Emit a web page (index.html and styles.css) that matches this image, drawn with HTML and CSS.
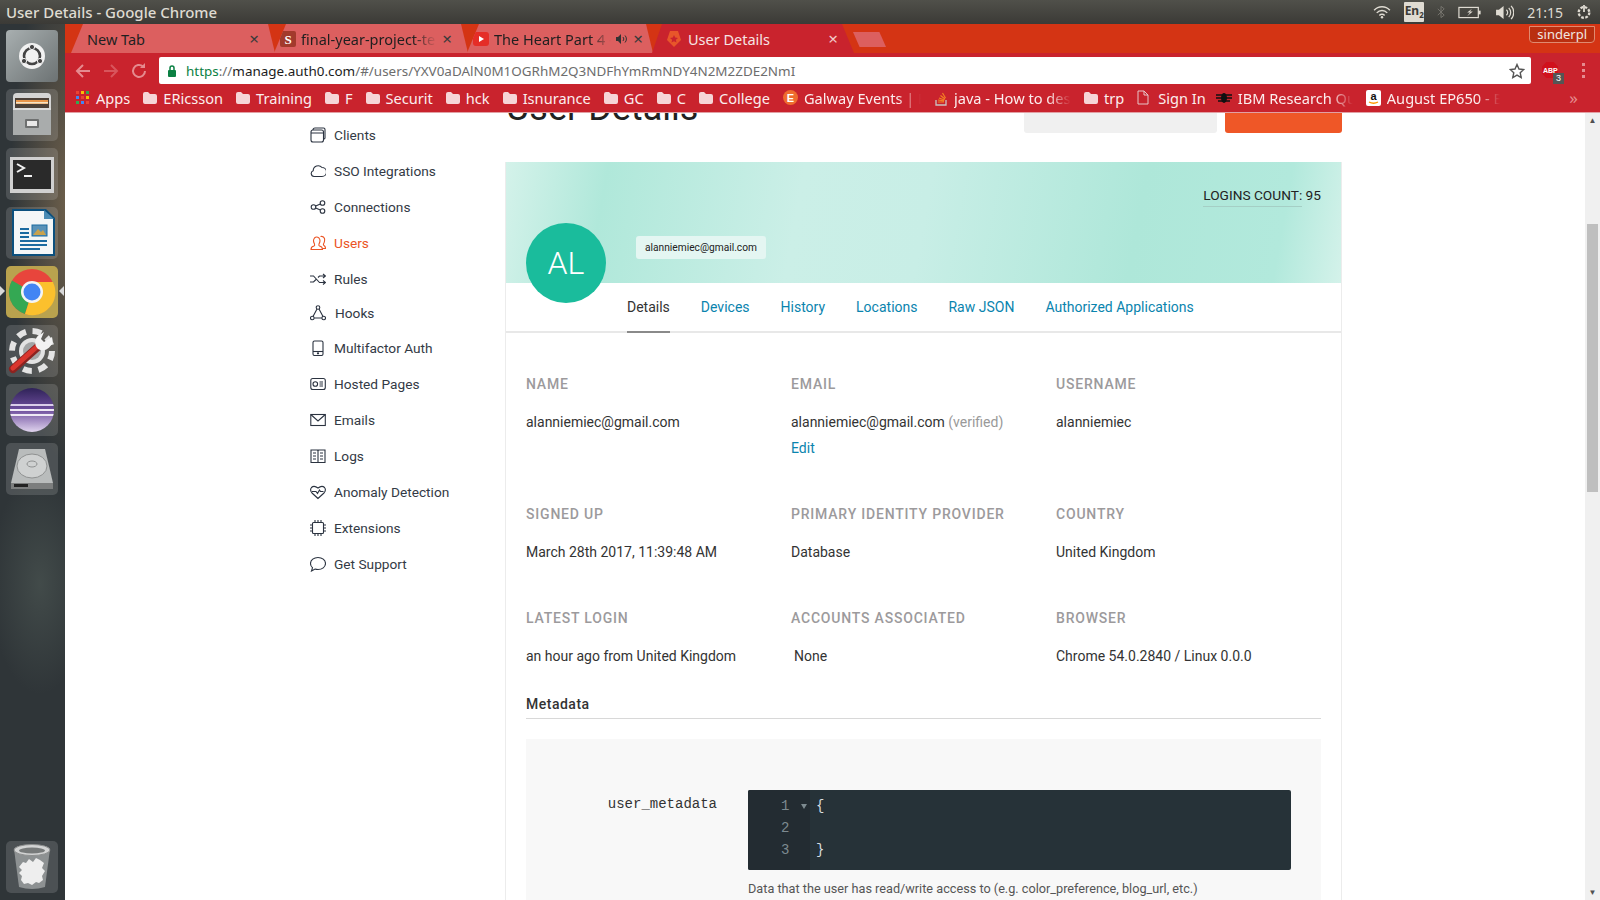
FILE: index.html
```html
<!DOCTYPE html>
<html lang="en">
<head>
    <meta charset="UTF-8">
    <title>User Details - Google Chrome</title>
    <link rel="stylesheet" href="styles.css">
</head>
<body>

<div class="topbar">
    <div class="win-title">User Details - Google Chrome</div>
    <div class="tray">
        <svg width="18" height="14" viewBox="0 0 20 16"><g fill="none" stroke="#dfdbd2" stroke-width="1.6"><path d="M1 6a12 12 0 0 1 18 0"/><path d="M4 9a8 8 0 0 1 12 0"/><path d="M7 12a4 4 0 0 1 6 0"/></g><circle cx="10" cy="14" r="1.4" fill="#dfdbd2"/></svg>
        <div class="lang">En<sub>2</sub></div>
        <svg width="8" height="16" viewBox="0 0 10 16"><path d="M1 4l8 8-4 3V1l4 3-8 8" fill="none" stroke="#77756f" stroke-width="1.2"/></svg>
        <svg width="24" height="13" viewBox="0 0 26 14"><rect x="1" y="1.500" width="21" height="11" fill="none" stroke="#dfdbd2" stroke-width="1.300"/><rect x="22" y="5" width="2.500" height="4" fill="#dfdbd2"/><path d="M15 3l-5 4h3l-3 4 6-5h-3z" fill="#dfdbd2"/></svg>
        <svg width="19" height="15" viewBox="0 0 20 16"><path d="M1 5h3l5-4v14l-5-4H1z" fill="#dfdbd2"/><g fill="none" stroke="#dfdbd2" stroke-width="1.300"><path d="M12 5a4 4 0 0 1 0 6"/><path d="M14.500 3a7 7 0 0 1 0 10"/><path d="M17 1a10 10 0 0 1 0 14"/></g></svg>
        <div class="clock">21:15</div>
        <svg width="16" height="16" viewBox="0 0 18 18"><circle cx="9" cy="9.500" r="6" fill="none" stroke="#dfdbd2" stroke-width="2.600" stroke-dasharray="3 1.700"/><circle cx="9" cy="9.500" r="3.200" fill="#3f3e3a"/><path d="M9 1v8" stroke="#dfdbd2" stroke-width="2"/></svg>
    </div>
</div>

<div class="desktop">
    <div class="launcher">
        <div class="launch-item">
            <svg width="52" height="52" viewBox="0 0 52 52"><defs><linearGradient id="g1" x1="0" y1="0" x2="1" y2="1"><stop offset="0" stop-color="#a8afb0"/><stop offset="1" stop-color="#6c7273"/></linearGradient></defs><rect width="52" height="52" rx="4" fill="url(#g1)"/><circle cx="26" cy="26" r="13" fill="#f2f2f2"/><circle cx="26" cy="26" r="8" fill="none" stroke="#444" stroke-width="2.600"/><circle cx="26" cy="17" r="2.600" fill="#444" stroke="#f2f2f2"/><circle cx="18" cy="31" r="2.600" fill="#444" stroke="#f2f2f2"/><circle cx="34" cy="31" r="2.600" fill="#444" stroke="#f2f2f2"/></svg>
        </div>
        <div class="launch-item tile">
            <svg width="52" height="52" viewBox="0 0 52 52"><path d="M7 8q0-4 4-4h30q4 0 4 4v38H7z" fill="#d4d4d4"/><rect x="9" y="9" width="34" height="11" fill="#4b4038"/><rect x="10" y="11" width="32" height="4" fill="#e8954a"/><rect x="10" y="13" width="32" height="1.500" fill="#f4e3c5"/><path d="M7 19h38v27H7z" fill="#a9acac"/><path d="M7 19h38v2H7z" fill="#dcdcdc"/><rect x="19" y="30" width="14" height="9" rx="1" fill="#6e7070"/><rect x="21" y="32" width="10" height="5" fill="#e9e9e9"/></svg>
        </div>
        <div class="launch-item tile">
            <svg width="52" height="52" viewBox="0 0 52 52"><rect x="4" y="9" width="44" height="36" fill="#d0d0d0"/><rect x="7" y="12" width="38" height="29" fill="#2a2a2a"/><path d="M11 16l7 4-7 4" fill="none" stroke="#f2f2f2" stroke-width="2"/><rect x="18" y="27" width="8" height="2" fill="#f2f2f2"/></svg>
        </div>
        <div class="launch-item tile">
            <svg width="52" height="52" viewBox="0 0 52 52"><path d="M6 2h34l9 9v38H6z" fill="#0b4f7d"/><path d="M8 4h31v8h8v35H8z" fill="#f4f6f7"/><path d="M38 3l10 9h-10z" fill="#4b8bb4"/><rect x="14" y="21" width="9" height="2" fill="#1b6aa0"/><rect x="14" y="25" width="9" height="2" fill="#1b6aa0"/><rect x="14" y="29" width="9" height="2" fill="#1b6aa0"/><rect x="14" y="33" width="27" height="2" fill="#1b6aa0"/><rect x="14" y="37" width="27" height="2" fill="#1b6aa0"/><rect x="14" y="41" width="20" height="2" fill="#1b6aa0"/><rect x="26" y="18" width="15" height="11" fill="#5a92b8" stroke="#1b6aa0"/><path d="M27 28l5-6 3 3 2-2 3 5z" fill="#c9a24d"/></svg>
        </div>
        <div class="launch-item tile-on">
            <svg width="52" height="52" viewBox="0 0 52 52"><circle cx="26" cy="26" r="23" fill="#e8453c"/><path d="M26 26L6 14.500A23 23 0 0 0 19 48z" fill="#34a853"/><path d="M26 26l-7 22A23 23 0 0 0 47 16H26z" fill="#fbc02d"/><circle cx="26" cy="26" r="11" fill="#f4f4f4"/><circle cx="26" cy="26" r="8.500" fill="#4285f4"/></svg>
        </div>
        <div class="launch-item tile">
            <svg width="52" height="52" viewBox="0 0 52 52"><circle cx="26" cy="26" r="20" fill="none" stroke="#e3e3e3" stroke-width="6" stroke-dasharray="9 6.700"/><circle cx="26" cy="26" r="13" fill="#e3e3e3"/><circle cx="26" cy="26" r="9" fill="#a3a5a6"/><path d="M7 44L34 20" stroke="#8c2320" stroke-width="8" stroke-linecap="round"/><path d="M7 43L34 19" stroke="#d9362e" stroke-width="5" stroke-linecap="round"/><path d="M32 24a9 9 0 0 1 3-15l3-2-3 7 3 3 8-5a10 10 0 0 1-14 12z" fill="#f2f2f2"/></svg>
        </div>
        <div class="launch-item tile">
            <svg width="52" height="52" viewBox="0 0 52 52"><defs><linearGradient id="g2" x1="0" y1="0" x2="0" y2="1"><stop offset="0" stop-color="#2f2258"/><stop offset=".5" stop-color="#6f4f9e"/><stop offset="1" stop-color="#e0d4ee"/></linearGradient><clipPath id="ball"><circle cx="26" cy="26" r="22"/></clipPath></defs><g clip-path="url(#ball)"><rect x="4" y="4" width="44" height="44" fill="url(#g2)"/><rect x="4" y="20" width="44" height="2" fill="#d9cde8"/><rect x="4" y="25" width="44" height="2" fill="#efe9f5"/><rect x="4" y="30" width="44" height="2" fill="#efe9f5"/></g></svg>
        </div>
        <div class="launch-item tile">
            <svg width="52" height="52" viewBox="0 0 52 52"><path d="M13 6h26l8 34H5z" fill="#b9bcbc"/><path d="M5 40h42v6H5z" fill="#7c7e7e"/><path d="M8 41h14v3H8z" fill="#222"/><ellipse cx="26" cy="23" rx="15" ry="12" fill="#cfd1d1" stroke="#8f9191"/><ellipse cx="26" cy="21" rx="5" ry="3" fill="none" stroke="#8f9191"/></svg>
        </div>
        <div class="launch-item tile trash">
            <svg width="52" height="52" viewBox="0 0 52 52"><path d="M8 8l5 38q13 4 26 0l5-38z" fill="#8d9192"/><ellipse cx="26" cy="9" rx="18" ry="5.500" fill="#d2d3d3" stroke="#8d8f8f"/><ellipse cx="26" cy="9.500" rx="13" ry="3" fill="#777a7a"/><path d="M13 26l4-5 3 1 3-4 4 3 3-4 4 2 4 3-2 5 3 3-3 5 1 4-4 3-3-1-4 3-4-2-4 1-3-4 1-4-3-3 3-3z" fill="#eeeeee"/></svg>
        </div>
    </div>

    <div class="browser">
        <div class="tabstrip">
            <div class="tab tab-new"><span class="tab-label">New Tab</span><span class="tab-x">×</span></div>
            <div class="tab tab-so">
                <svg class="fav" width="16" height="16" viewBox="0 0 16 16"><rect width="16" height="16" rx="2" fill="#a33a2c"/><text x="8" y="13" font-size="13" font-weight="700" fill="#fff" text-anchor="middle" font-family="Liberation Serif">S</text></svg>
                <span class="tab-label fade">final-year-project-te</span><span class="tab-x">×</span>
            </div>
            <div class="tab tab-yt">
                <svg class="fav" width="16" height="16" viewBox="0 0 16 16"><rect y="1" width="16" height="14" rx="3" fill="#e52d27"/><path d="M6 5l5 3-5 3z" fill="#fff"/></svg>
                <span class="tab-label fade">The Heart Part 4 -</span>
                <svg width="12" height="12" viewBox="0 0 12 12"><path d="M0 4h2l3-3v10L2 8H0z" fill="#333"/><path d="M7 4a3 3 0 0 1 0 4M9 2.500a5 5 0 0 1 0 7" fill="none" stroke="#333"/></svg>
                <span class="tab-x">×</span>
            </div>
            <div class="tab tab-active">
                <svg class="fav" width="18" height="18" viewBox="0 0 18 18"><path d="M5 1h8l3 9-7 7-7-7z" fill="#e8562a"/><path d="M9 5l1.200 2.600 2.800.300-2.100 1.900.6 2.800L9 11.200l-2.500 1.400.6-2.800L5 7.900l2.800-.3z" fill="#c9232d"/></svg>
                <span class="tab-label">User Details</span><span class="tab-x">×</span>
            </div>
            <div class="tab-add"></div>
            <div class="profile">sinderpl</div>
        </div>

        <div class="toolbar">
            <div class="nav-btns">
                <svg width="18" height="18" viewBox="0 0 18 18"><path d="M16 9H3m6-6L3 9l6 6" fill="none" stroke="#e58b8f" stroke-width="2"/></svg>
                <svg width="18" height="18" viewBox="0 0 18 18"><path d="M2 9h13M9 3l6 6-6 6" fill="none" stroke="#d8555c" stroke-width="2"/></svg>
                <svg width="18" height="18" viewBox="0 0 18 18"><path d="M15 9a6 6 0 1 1-2-4.500" fill="none" stroke="#e58b8f" stroke-width="2"/><path d="M15 1v5h-5z" fill="#e58b8f"/></svg>
            </div>
            <div class="omnibox">
                <svg width="12" height="14" viewBox="0 0 12 14"><rect x="2" y="6" width="8" height="7" rx="1" fill="#0b8043"/><path d="M4 6V4a2 2 0 0 1 4 0v2" fill="none" stroke="#0b8043" stroke-width="1.500"/></svg>
                <div class="url"><span class="url-https">https</span><span class="url-dim">://</span>manage.auth0.com<span class="url-dim">/#/users/YXV0aDAlN0M1OGRhM2Q3NDFhYmRmNDY4N2M2ZDE2NmI</span></div>
                <svg class="star" width="16" height="16" viewBox="0 0 16 16"><path d="M8 1.500l2 4.500 4.800.500-3.600 3.200 1 4.800L8 12.100l-4.200 2.400 1-4.800L1.200 6.500 6 6z" fill="none" stroke="#555" stroke-width="1.400"/></svg>
            </div>
            <div class="abp">
                <svg width="16" height="16" viewBox="0 0 18 18"><path d="M5 0h8l5 5v8l-5 5H5l-5-5V5z" fill="#d0111c"/></svg>
                <span class="abp-text">ABP</span>
                <span class="abp-count">3</span>
            </div>
            <div class="menu-dots"><i></i><i></i><i></i></div>
        </div>

        <div class="bookmarks">
            <div class="bm"><svg width="14" height="14" viewBox="0 0 14 14"><g><rect width="3" height="3" fill="#ea4335"/><rect x="5" width="3" height="3" fill="#fbbc05"/><rect x="10" width="3" height="3" fill="#34a853"/><rect y="5" width="3" height="3" fill="#4285f4"/><rect x="5" y="5" width="3" height="3" fill="#ea4335"/><rect x="10" y="5" width="3" height="3" fill="#fbbc05"/><rect y="10" width="3" height="3" fill="#34a853"/><rect x="5" y="10" width="3" height="3" fill="#4285f4"/><rect x="10" y="10" width="3" height="3" fill="#ea4335"/></g></svg>Apps</div>
            <div class="bm"><svg class="folder" viewBox="0 0 14 12"><use href="#ico-folder"/></svg>ERicsson</div>
            <div class="bm"><svg class="folder" viewBox="0 0 14 12"><use href="#ico-folder"/></svg>Training</div>
            <div class="bm"><svg class="folder" viewBox="0 0 14 12"><use href="#ico-folder"/></svg>F</div>
            <div class="bm"><svg class="folder" viewBox="0 0 14 12"><use href="#ico-folder"/></svg>Securit</div>
            <div class="bm"><svg class="folder" viewBox="0 0 14 12"><use href="#ico-folder"/></svg>hck</div>
            <div class="bm"><svg class="folder" viewBox="0 0 14 12"><use href="#ico-folder"/></svg>Isnurance</div>
            <div class="bm"><svg class="folder" viewBox="0 0 14 12"><use href="#ico-folder"/></svg>GC</div>
            <div class="bm"><svg class="folder" viewBox="0 0 14 12"><use href="#ico-folder"/></svg>C</div>
            <div class="bm"><svg class="folder" viewBox="0 0 14 12"><use href="#ico-folder"/></svg>College</div>
            <div class="bm"><svg width="15" height="15" viewBox="0 0 15 15"><circle cx="7.500" cy="7.500" r="7.500" fill="#ef6c2e"/><text x="7.500" y="11.500" font-size="11" font-weight="700" fill="#fff" text-anchor="middle" font-family="Liberation Sans">E</text></svg><span class="bm-fade w117">Galway Events | E</span></div>
            <div class="bm"><svg width="14" height="16" viewBox="0 0 14 16"><path d="M2 10v5h10v-5" fill="none" stroke="#c9c4c0" stroke-width="1.300"/><path d="M4 12h6M4 10l6 .8M5 8l5.500 2M6.500 5.500l4.500 3.500M8.500 3l3 5" stroke="#f48024" stroke-width="1.200"/></svg><span class="bm-fade w117b">java - How to des</span></div>
            <div class="bm"><svg class="folder" viewBox="0 0 14 12"><use href="#ico-folder"/></svg>trp</div>
            <div class="bm bm-doc"><svg width="12" height="15" viewBox="0 0 12 15"><path d="M1 1h6l4 4v9H1zM7 1v4h4" fill="none" stroke="#e6c6c8"/></svg>Sign In</div>
            <div class="bm"><svg width="16" height="12" viewBox="0 0 16 12"><ellipse cx="8" cy="6" rx="3" ry="5" fill="#111"/><path d="M0 3h16M0 6h16M2 9h12" stroke="#111" stroke-width="1.300"/></svg><span class="bm-fade w115">IBM Research Qu</span></div>
            <div class="bm"><svg width="15" height="16" viewBox="0 0 15 16"><rect width="15" height="16" rx="2" fill="#fff"/><text x="7.500" y="10" font-size="11" font-weight="700" fill="#111" text-anchor="middle" font-family="Liberation Sans">a</text><path d="M3 12q4.500 2.500 9 0" fill="none" stroke="#f90" stroke-width="1.400"/></svg><span class="bm-fade w113">August EP650 - B</span></div>
            <div class="bm-more">»</div>
        </div>

        <div class="viewport">
            <div class="page">
                <nav class="sidebar">
                    <a class="side-link"><svg viewBox="0 0 16 16"><rect x="1" y="3" width="12.500" height="12" rx="2"/><path d="M1 6h12.500M3 3q0-2 2-2h8.500q1.500 0 1.500 1.500V11q0 1-1.500 1"/></svg>Clients</a>
                    <a class="side-link"><svg viewBox="0 0 16 16"><path d="M4 13.500a3 3 0 0 1-.8-5.800A5 5 0 0 1 12 4.500a4.500 4.500 0 0 1 0 9z"/></svg>SSO Integrations</a>
                    <a class="side-link"><svg viewBox="0 0 16 16"><circle cx="3.500" cy="8" r="2.300"/><circle cx="12.500" cy="4" r="2.300"/><circle cx="12.500" cy="12" r="2.300"/><path d="M5.600 7l4.800-2.100M5.600 9l4.800 2.100"/></svg>Connections</a>
                    <a class="side-link active"><svg viewBox="0 0 16 16"><path d="M1 14.500q0-3 3-3.500 1-.500.500-2-2-3.500 0-6 2-2 4.500 0 2 2.500 0 6-.5 1.500.5 2 3 .5 3 3.500z"/><path d="M10.500 1.500q3-.8 4 2 .5 3-1 5.500-.3 1 .5 1.500 1.500.8 1.500 3h-3"/></svg>Users</a>
                    <a class="side-link"><svg viewBox="0 0 16 16"><path d="M0 5h3.500l6 6.500H15M0 11h3.500L6 8.500M8 6.500l1.500-1.500H15M13 3l2.500 2-2.500 2M13 9.500l2.500 2-2.500 2"/></svg>Rules</a>
                    <a class="side-link hook"><svg viewBox="0 0 16 16"><circle cx="8" cy="2.500" r="1.800"/><circle cx="2.300" cy="13" r="1.800"/><circle cx="13.700" cy="13" r="1.800"/><path d="M7 4L3 11.500M9 4l4 7.500M4.100 13h7.800"/></svg>Hooks</a>
                    <a class="side-link"><svg viewBox="0 0 16 16"><rect x="3" y="1" width="10" height="14.500" rx="1.500"/><path d="M3 11.500h10"/><circle cx="8" cy="13.300" r=".6"/></svg>Multifactor Auth</a>
                    <a class="side-link"><svg viewBox="0 0 16 16"><rect x=".8" y="2.500" width="14.500" height="11" rx="2"/><circle cx="5.300" cy="8" r="2.300"/><path d="M9.500 6h3.500M9.500 8h3.500M9.500 10h3.500"/></svg>Hosted Pages</a>
                    <a class="side-link"><svg viewBox="0 0 16 16"><rect x=".8" y="2.500" width="14.500" height="11"/><path d="M.8 2.500L8 9l7.300-6.500"/></svg>Emails</a>
                    <a class="side-link"><svg viewBox="0 0 16 16"><path d="M1 2h6.500L8 3l.5-1H15v12.500H1zM8 3v11.500M3 5h3M3 8h3M3 11h3M10 5h3M10 8h3M10 11h3"/></svg>Logs</a>
                    <a class="side-link"><svg viewBox="0 0 16 16"><path d="M8 14.500L2 9Q-.5 6 1.500 3.500 4 1 8 4q4-3 6.500-.5Q16.500 6 14 9z"/><path d="M2 7.500h4l1.500 2 2-3.500 1 1.500h3"/></svg>Anomaly Detection</a>
                    <a class="side-link"><svg viewBox="0 0 16 16"><rect x="2.500" y="2.500" width="11" height="11" rx="1"/><path d="M5 0v2.500M8 0v2.500M11 0v2.500M5 13.500V16M8 13.500V16M11 13.500V16M0 5h2.500M0 8h2.500M0 11h2.500M13.500 5H16M13.500 8H16M13.500 11H16"/></svg>Extensions</a>
                    <a class="side-link"><svg viewBox="0 0 16 16"><path d="M8 1.500c4 0 7.500 2.500 7.500 6s-3.500 6-7.500 6q-1.500 0-3-.5L1.500 15l1-3.300Q.5 10 .5 7.500c0-3.500 3.500-6 7.500-6z"/></svg>Get Support</a>
                </nav>

                <main class="main">
                    <div class="page-head">
                        <h1>User Details</h1>
                        <div class="head-btns">
                            <div class="btn btn-grey"></div>
                            <div class="btn btn-orange"></div>
                        </div>
                    </div>

                    <section class="panel">
                        <div class="banner">
                            <div class="logins"><span class="logins-label">LOGINS COUNT:</span> 95</div>
                            <div class="avatar">AL</div>
                            <div class="email-chip">alanniemiec@gmail.com</div>
                        </div>

                        <div class="user-tabs">
                            <a class="user-tab current">Details</a>
                            <a class="user-tab">Devices</a>
                            <a class="user-tab">History</a>
                            <a class="user-tab">Locations</a>
                            <a class="user-tab">Raw JSON</a>
                            <a class="user-tab">Authorized Applications</a>
                        </div>

                        <div class="details">
                            <div class="field-row first">
                                <div class="field">
                                    <div class="label">NAME</div>
                                    <div class="value">alanniemiec@gmail.com</div>
                                </div>
                                <div class="field">
                                    <div class="label">EMAIL</div>
                                    <div class="value">alanniemiec@gmail.com <span class="muted">(verified)</span></div>
                                    <a class="edit">Edit</a>
                                </div>
                                <div class="field">
                                    <div class="label">USERNAME</div>
                                    <div class="value">alanniemiec</div>
                                </div>
                            </div>
                            <div class="field-row">
                                <div class="field">
                                    <div class="label">SIGNED UP</div>
                                    <div class="value">March 28th 2017, 11:39:48 AM</div>
                                </div>
                                <div class="field">
                                    <div class="label">PRIMARY IDENTITY PROVIDER</div>
                                    <div class="value">Database</div>
                                </div>
                                <div class="field">
                                    <div class="label">COUNTRY</div>
                                    <div class="value">United Kingdom</div>
                                </div>
                            </div>
                            <div class="field-row last">
                                <div class="field">
                                    <div class="label">LATEST LOGIN</div>
                                    <div class="value">an hour ago from United Kingdom</div>
                                </div>
                                <div class="field">
                                    <div class="label">ACCOUNTS ASSOCIATED</div>
                                    <div class="value indent">None</div>
                                </div>
                                <div class="field">
                                    <div class="label">BROWSER</div>
                                    <div class="value">Chrome 54.0.2840 / Linux 0.0.0</div>
                                </div>
                            </div>

                            <h2 class="section-title">Metadata</h2>
                            <div class="meta-box">
                                <div class="meta-row">
                                    <div class="meta-name">user_metadata</div>
                                    <div class="meta-body">
                                        <div class="editor">
                                            <div class="gutter">
                                                <div class="ln">1<i class="fold"></i></div>
                                                <div class="ln">2</div>
                                                <div class="ln">3</div>
                                            </div>
                                            <div class="code">
                                                <div>{</div>
                                                <div>&nbsp;</div>
                                                <div>}</div>
                                            </div>
                                        </div>
                                        <p class="help">Data that the user has read/write access to (e.g. color_preference, blog_url, etc.)</p>
                                    </div>
                                </div>
                            </div>
                        </div>
                    </section>
                </main>
            </div>
            <div class="scrollbar">
                <div class="sb-arrow">▲</div>
                <div class="sb-track"><div class="sb-thumb"></div></div>
                <div class="sb-arrow">▼</div>
            </div>
        </div>
    </div>
</div>

<svg class="defs" width="0" height="0"><symbol id="ico-folder" viewBox="0 0 14 12"><path d="M0 2q0-2 2-2h3l2 2h5q2 0 2 2v6q0 2-2 2H2q-2 0-2-2z" fill="#f6d5d7"/></symbol></svg>

</body>
</html>
```

FILE: styles.css
```css
* {
    box-sizing: border-box;
}
html, body {
    margin: 0;
    padding: 0;
    height: 100%;
    overflow: hidden;
}
body {
    width: 1600px;
    height: 900px;
    display: flex;
    flex-direction: column;
    font-family: Roboto, Arial, sans-serif;
    color: #333;
    background: #fff;
}
a {
    text-decoration: none;
    color: inherit;
}
.defs {
    position: absolute;
}

/* ubuntu top bar */
.topbar {
    height: 24px;
    flex: none;
    display: flex;
    align-items: center;
    justify-content: space-between;
    padding: 0 8px 0 6px;
    background: linear-gradient(#50504a, #3b3a36);
    color: #dfdbd2;
}
.win-title {
    font-family: "Noto Sans", sans-serif;
    font-size: 15px;
    font-weight: 500;
}
.tray {
    display: flex;
    align-items: center;
    gap: 13px;
}
.lang {
    width: 20px;
    height: 20px;
    background: #dfdbd2;
    color: #3b3a36;
    font: 700 12px/18px "Noto Sans", sans-serif;
    text-align: center;
    border-radius: 1px;
}
.lang sub {
    font-size: 8px;
    line-height: 0;
}
.clock {
    font: 14px "Noto Sans", sans-serif;
}

.desktop {
    flex: 1;
    display: flex;
    min-height: 0;
}

/* launcher */
.launcher {
    width: 65px;
    flex: none;
    display: flex;
    flex-direction: column;
    gap: 7px;
    padding: 6px 0 7px 6px;
    background:
        radial-gradient(ellipse 60px 260px at 70px 180px, rgba(190, 150, 100, .45), transparent),
        radial-gradient(ellipse 50px 110px at 40px 560px, rgba(110, 125, 115, .3), transparent),
        #2f3538;
}
.launch-item {
    width: 52px;
    height: 52px;
    border-radius: 5px;
    position: relative;
}
.tile {
    background: rgba(255, 255, 255, .14);
}
.tile-on {
    background: #b9a24e;
}
.tile-on::before, .tile-on::after {
    content: "";
    position: absolute;
    top: 20px;
    border-style: solid;
    border-color: transparent;
}
.tile-on::before {
    left: -6px;
    border-width: 5px 0 5px 5px;
    border-left-color: #d8d8d8;
}
.tile-on::after {
    right: -6px;
    border-width: 5px 5px 5px 0;
    border-right-color: #d8d8d8;
}
.trash {
    margin-top: auto;
}

/* chrome */
.browser {
    flex: 1;
    min-width: 0;
    display: flex;
    flex-direction: column;
}
.tabstrip {
    height: 29px;
    flex: none;
    display: flex;
    align-items: stretch;
    padding-left: 6px;
    position: relative;
    background: #d43414;
    font-family: "Noto Sans", sans-serif;
    font-size: 14.500px;
}
.tab {
    display: flex;
    align-items: center;
    gap: 5px;
    height: 29px;
    padding: 0 16px 0 6px;
    margin-right: -1px;
    background: #dc5f5f;
    color: #1f1f1f;
    clip-path: polygon(0 100%, 12px 0, calc(100% - 7px) 0, 100% 100%);
}
.tab-new {
    width: 204px;
    padding-left: 16px;
}
.tab-so {
    width: 194px;
}
.tab-yt {
    width: 186px;
    padding-right: 10px;
}
.tab-active {
    width: 202px;
    background: #c9232d;
    color: #f6e4e4;
    padding-left: 13px;
    clip-path: polygon(0 100%, 10px 0, calc(100% - 12px) 0, 100% 100%);
}
.tab-label {
    flex: 1;
    white-space: nowrap;
    overflow: hidden;
}
.fade {
    -webkit-mask-image: linear-gradient(to right, #000 82%, transparent);
    mask-image: linear-gradient(to right, #000 82%, transparent);
}
.tab-x {
    font-size: 17px;
    line-height: 1;
    color: #3a3a3a;
}
.tab-active .tab-x {
    color: #f2c8c8;
}
.tab-add {
    width: 33px;
    height: 15px;
    margin: 8px 0 0 0;
    background: #dc5f5f;
    clip-path: polygon(0 0, 80% 0, 100% 100%, 20% 100%);
}
.profile {
    position: absolute;
    right: 5px;
    top: 2px;
    height: 17px;
    padding: 0 7px;
    line-height: 15px;
    font-size: 13px;
    color: #f1e6e0;
    background: #b92f10;
    border: 1px solid #e08a70;
    border-radius: 0 0 4px 4px;
}
.toolbar {
    height: 32px;
    flex: none;
    display: flex;
    align-items: center;
    background: #c9232d;
    padding: 3px 6px 0 9px;
}
.nav-btns {
    width: 85px;
    display: flex;
    gap: 10px;
    align-items: center;
}
.omnibox {
    width: 1372px;
    height: 27px;
    display: flex;
    align-items: center;
    gap: 8px;
    padding: 0 6px 0 7px;
    background: #fff;
    border-radius: 2px;
}
.url {
    flex: 1;
    font: 13.450px "Noto Sans", sans-serif;
    color: #1c1c1c;
    white-space: nowrap;
}
.url-https {
    color: #0b8043;
}
.url-dim {
    color: #6d6d6d;
}
.abp {
    position: relative;
    width: 22px;
    height: 22px;
    margin-left: 11px;
    margin-right: 18px;
    padding-top: 2px;
}
.abp-text {
    position: absolute;
    left: 1px;
    top: 6px;
    font: 700 7px/9px "Liberation Sans", sans-serif;
    color: #fff;
}
.abp-count {
    position: absolute;
    left: 11px;
    top: 13px;
    width: 11px;
    height: 11px;
    background: #555;
    color: #fff;
    font: 9px/11px "Liberation Sans", sans-serif;
    text-align: center;
}
.menu-dots i {
    display: block;
    width: 3px;
    height: 3px;
    margin: 3px 0;
    background: #e58b8f;
}
.bookmarks {
    height: 28px;
    flex: none;
    display: flex;
    align-items: center;
    gap: 13px;
    padding: 0 0 2px 11px;
    background: #c9232d;
    border-bottom: 1px solid #e2a0a4;
    color: #fbeeee;
    font: 14.600px "Noto Sans", sans-serif;
    position: relative;
}
.bm {
    display: flex;
    align-items: center;
    gap: 6px;
    white-space: nowrap;
}
.bm-doc {
    gap: 9px;
    margin-right: -3px;
}
.folder {
    width: 14px;
    height: 12px;
}
.bm-fade {
    display: block;
    overflow: hidden;
    -webkit-mask-image: linear-gradient(to right, #000 80%, transparent);
    mask-image: linear-gradient(to right, #000 80%, transparent);
}
.w117 { width: 117px; }
.w117b { width: 117px; }
.w115 { width: 115px; }
.w113 { width: 113px; }
.bm-more {
    position: absolute;
    right: 22px;
    top: 1px;
    font-size: 17px;
    color: #e58b8f;
}

/* page */
.viewport {
    flex: 1;
    min-height: 0;
    display: flex;
    background: #fff;
}
.page {
    flex: 1;
    min-width: 0;
    overflow: hidden;
    display: flex;
}
.sidebar {
    width: 440px;
    flex: none;
    padding: 4px 0 0 245px;
    display: flex;
    flex-direction: column;
}
.side-link {
    height: 36px;
    display: flex;
    align-items: center;
    gap: 8px;
    font-size: 13.700px;
    color: #333a45;
}
.side-link svg {
    width: 16px;
    height: 16px;
    flex: none;
    fill: none;
    stroke: #2b3340;
    stroke-width: 1.100;
}
.side-link.hook {
    height: 31px;
    margin-bottom: 2px;
    gap: 9px;
}
.side-link.active {
    color: #eb5424;
}
.side-link.active svg {
    stroke: #eb5424;
}

.main {
    width: 837px;
    flex: none;
}
.page-head {
    height: 49px;
    display: flex;
    justify-content: space-between;
    align-items: flex-end;
    padding-bottom: 29px;
    overflow: hidden;
}
.page-head h1 {
    margin: 0 0 5px 1px;
    font-size: 36px;
    font-weight: 400;
    line-height: 40px;
    color: #222;
}
.head-btns {
    display: flex;
    gap: 8px;
}
.btn {
    height: 30px;
    border-radius: 3px;
}
.btn-grey {
    width: 193px;
    background: #f0f0f0;
}
.btn-orange {
    width: 117px;
    background: #ef5727;
}
.panel {
    border: 1px solid #ececec;
    border-top: none;
}
.banner {
    height: 121px;
    position: relative;
    background: linear-gradient(100deg, #d4f2ea 0%, #b0e8da 12%, #cbefe7 35%, #c8eee6 50%, #aee7d9 75%, #b2e9dc 92%, #d4f2ea 100%);
}
.logins {
    position: absolute;
    right: 20px;
    top: 25px;
    font-size: 13.700px;
    color: #222;
}
.logins-label {
    display: inline-block;
    padding-bottom: 3px;
    border-bottom: 1px solid #a5cfc5;
}
.avatar {
    position: absolute;
    left: 20px;
    top: 61px;
    width: 80px;
    height: 80px;
    border-radius: 50%;
    background: #1abc9c;
    color: #fff;
    font-size: 32px;
    font-weight: 300;
    line-height: 80px;
    text-align: center;
}
.email-chip {
    position: absolute;
    left: 130px;
    top: 74px;
    width: 130px;
    height: 23px;
    background: #e4f6f2;
    border-radius: 3px;
    font-size: 10.200px;
    line-height: 24px;
    text-align: center;
    color: #222;
}
.user-tabs {
    height: 50px;
    display: flex;
    gap: 31px;
    padding-left: 121px;
    border-bottom: 2px solid #e8e8e8;
}
.user-tab {
    height: 50px;
    line-height: 48px;
    font-size: 14px;
    color: #0a84ae;
}
.user-tab.current {
    color: #333;
    border-bottom: 2px solid #8a8a8a;
}
.details {
    padding: 42px 20px 0;
}
.field-row {
    display: grid;
    grid-template-columns: 265px 265px 1fr;
    height: 104px;
}
.field-row.first {
    height: 130px;
}
.field-row.last {
    height: 86px;
}
.label {
    font-size: 14px;
    font-weight: 500;
    letter-spacing: .8px;
    color: #9c9a9c;
    line-height: 18px;
    margin-bottom: 20px;
}
.value {
    font-size: 14px;
    line-height: 18px;
    color: #333;
}
.value.indent {
    padding-left: 3px;
}
.muted {
    color: #999;
}
.edit {
    display: block;
    margin-top: 8px;
    font-size: 14px;
    line-height: 18px;
    color: #0a84ae;
}
.section-title {
    margin: 0;
    height: 24px;
    font-size: 14px;
    font-weight: 500;
    letter-spacing: .5px;
    line-height: 19px;
    color: #333;
    border-bottom: 1px solid #d8d8d8;
}
.meta-box {
    margin-top: 20px;
    padding: 51px 30px 40px 0;
    background: #f8f8f8;
}
.meta-row {
    display: flex;
    gap: 31px;
}
.meta-name {
    width: 191px;
    padding-top: 6px;
    text-align: right;
    font: 14px "Liberation Mono", monospace;
    color: #333;
}
.meta-body {
    flex: 1;
}
.editor {
    display: flex;
    height: 80px;
    background: #263238;
    border-radius: 2px;
    font: 14px/22px "Liberation Mono", monospace;
    color: #d8dee0;
}
.gutter {
    width: 62px;
    padding: 5px 0 0 33px;
    background: #232c32;
    color: #7d8a90;
    border-radius: 2px 0 0 2px;
}
.ln {
    position: relative;
}
.fold {
    position: absolute;
    left: 20px;
    top: 9px;
    border-style: solid;
    border-color: #7d8a90 transparent transparent;
    border-width: 5px 3px 0;
}
.code {
    padding: 5px 0 0 6px;
}
.help {
    margin: 10px 0 0;
    font-size: 12.700px;
    line-height: 18px;
    color: #555;
}

.scrollbar {
    width: 15px;
    flex: none;
    display: flex;
    flex-direction: column;
    background: #f0f0f0;
}
.sb-arrow {
    height: 15px;
    font-size: 8px;
    line-height: 15px;
    text-align: center;
    color: #505050;
}
.sb-track {
    flex: 1;
    padding: 96px 2px 0;
}
.sb-thumb {
    height: 268px;
    background: #bfbfbf;
}
```
